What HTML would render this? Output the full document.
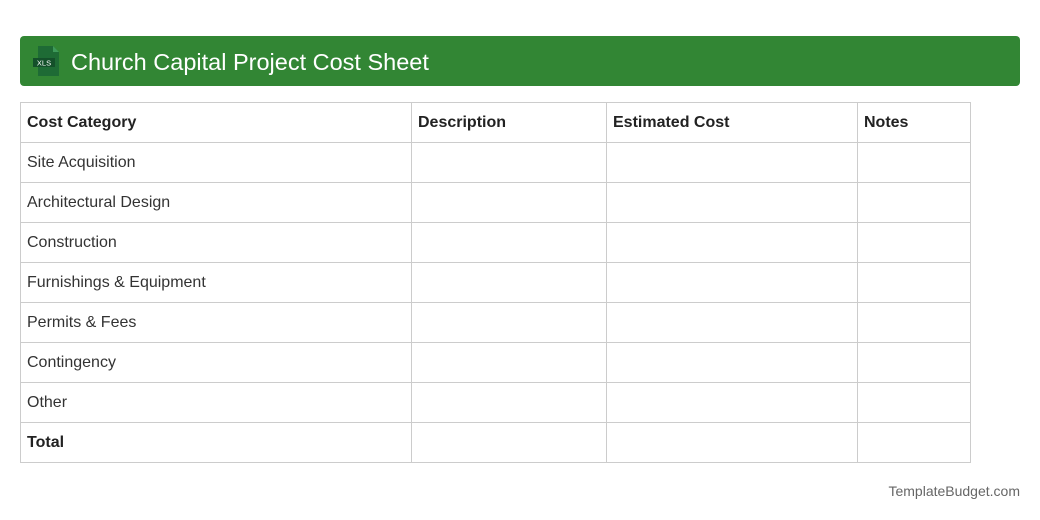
<!DOCTYPE html>
<html><head><style>
body{margin:0;width:1040px;height:520px;background:#fff;font-family:"Liberation Sans",sans-serif;position:relative}
.hdr{position:absolute;left:20px;top:36px;width:1000px;height:50px;background:#328634;border-radius:4px;color:#fff}
.hdr .t{position:absolute;left:51px;top:12px;font-size:23.5px;line-height:28px}
.ic{position:absolute;left:11px;top:9px}
table{position:absolute;left:20px;top:102px;border-collapse:collapse;width:950px;table-layout:fixed}
td{border:1px solid #ccc;height:40px;padding:0 6px;font-size:16px;color:#333;box-sizing:border-box}
.b td{font-weight:bold;color:#222}
.f{position:absolute;right:20px;top:483px;font-size:14px;color:#666}
</style></head><body>
<div class="hdr">
<svg class="ic" width="30" height="32" viewBox="0 0 30 32"><path d="M7 1H22L28 7V31H7Z" fill="#1e6b35"/><path d="M22 1V7H28Z" fill="#3e9a5a"/><rect x="2" y="13" width="22" height="9" fill="#14502a"/><text x="13" y="20.5" font-size="7.5" fill="#fff" text-anchor="middle" font-family="Liberation Sans">XLS</text></svg>
<div class="t">Church Capital Project Cost Sheet</div></div>
<table>
<col style="width:391px"><col style="width:195px"><col style="width:251px"><col style="width:113px">
<tr class="b"><td>Cost Category</td><td>Description</td><td>Estimated Cost</td><td>Notes</td></tr>
<tr><td>Site Acquisition</td><td></td><td></td><td></td></tr>
<tr><td>Architectural Design</td><td></td><td></td><td></td></tr>
<tr><td>Construction</td><td></td><td></td><td></td></tr>
<tr><td>Furnishings &amp; Equipment</td><td></td><td></td><td></td></tr>
<tr><td>Permits &amp; Fees</td><td></td><td></td><td></td></tr>
<tr><td>Contingency</td><td></td><td></td><td></td></tr>
<tr><td>Other</td><td></td><td></td><td></td></tr>
<tr class="b"><td>Total</td><td></td><td></td><td></td></tr>
</table>
<div class="f">TemplateBudget.com</div>
</body></html>
